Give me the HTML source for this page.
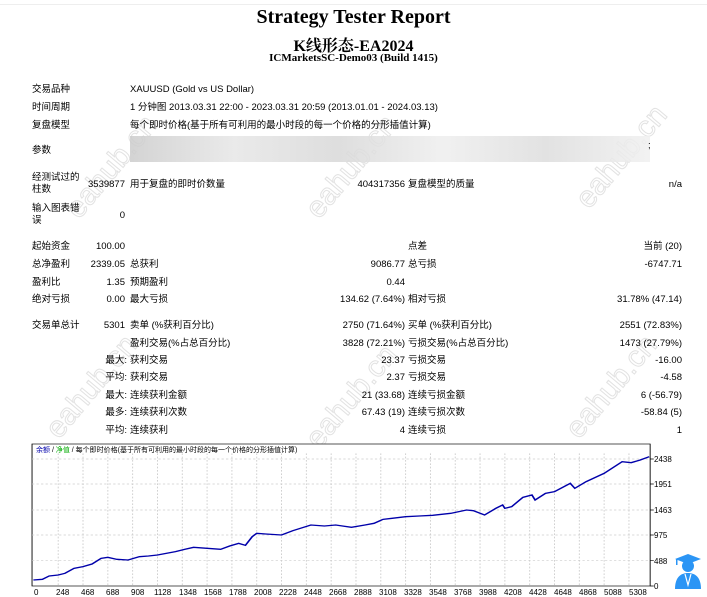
<!DOCTYPE html>
<html><head><meta charset="utf-8"><style>
*{margin:0;padding:0}
body{width:707px;height:597px;background:#fff;position:relative;overflow:hidden;font-family:"Liberation Sans","Noto Sans CJK SC",sans-serif;font-size:9.5px;color:#000}
.t{position:absolute;white-space:nowrap;line-height:12px}
.r{text-align:right}
.h{position:absolute;left:0;width:707px;text-align:center;font-family:"Liberation Serif","Noto Serif CJK SC",serif;font-weight:bold;white-space:nowrap}
.wm{position:absolute;color:transparent;-webkit-text-stroke:1px #e2e2e2;font-size:30px;transform:rotate(-50deg);font-family:"Liberation Sans",sans-serif;white-space:nowrap}
.ax{position:absolute;font-size:8px;white-space:nowrap;line-height:9px}
</style></head><body>
<div style="position:absolute;left:0;top:4px;width:707px;height:1px;background:#eee"></div>
<div class="wm" style="left:50px;top:150px">eahub.cn</div>
<div class="wm" style="left:290px;top:150px">eahub.cn</div>
<div class="wm" style="left:560px;top:140px">eahub.cn</div>
<div class="wm" style="left:30px;top:370px">eahub.cn</div>
<div class="wm" style="left:290px;top:380px">eahub.cn</div>
<div class="wm" style="left:550px;top:370px">eahub.cn</div>

<div class="h" style="top:6px;font-size:20px">Strategy Tester Report</div>
<div class="h" style="top:33px;font-size:16px">K线形态-EA2024</div>
<div class="h" style="top:52px;font-size:11px">ICMarketsSC-Demo03 (Build 1415)</div>

<div class="t" style="left:32px;top:84px">交易品种</div><div class="t" style="left:130px;top:84px">XAUUSD (Gold vs US Dollar)</div>
<div class="t" style="left:32px;top:102px">时间周期</div><div class="t" style="left:130px;top:102px">1 分钟图 2013.03.31 22:00 - 2023.03.31 20:59 (2013.01.01 - 2024.03.13)</div>
<div class="t" style="left:32px;top:120px">复盘模型</div><div class="t" style="left:130px;top:120px">每个即时价格(基于所有可利用的最小时段的每一个价格的分形插值计算)</div>
<div class="t" style="left:32px;top:145px">参数</div>
<div style="position:absolute;left:130px;top:136px;width:520px;height:26px;background:linear-gradient(90deg,#ccc,#e6e6e6 20%,#d8d8d8 40%,#eee 60%,#ddd 80%,#f0f0f0);opacity:.85"></div>
<div class="t" style="left:648px;top:140px">;</div>
<div class="t" style="left:32px;top:172px">经测试过的<br>柱数</div><div class="t r" style="left:60px;width:65px;top:179px">3539877</div>
<div class="t" style="left:130px;top:179px">用于复盘的即时价数量</div><div class="t r" style="left:300px;width:105px;top:179px">404317356</div>
<div class="t" style="left:408px;top:179px">复盘模型的质量</div><div class="t r" style="left:600px;width:82px;top:179px">n/a</div>
<div class="t" style="left:32px;top:203px">输入图表错<br>误</div><div class="t r" style="left:60px;width:65px;top:210px">0</div>

<div class="t" style="left:32px;top:241px">起始资金</div><div class="t r" style="left:60px;width:65px;top:241px">100.00</div>
<div class="t" style="left:408px;top:241px">点差</div><div class="t r" style="left:560px;width:122px;top:241px">当前 (20)</div>
<div class="t" style="left:32px;top:259px">总净盈利</div><div class="t r" style="left:60px;width:65px;top:259px">2339.05</div>
<div class="t" style="left:130px;top:259px">总获利</div><div class="t r" style="left:300px;width:105px;top:259px">9086.77</div>
<div class="t" style="left:408px;top:259px">总亏损</div><div class="t r" style="left:560px;width:122px;top:259px">-6747.71</div>
<div class="t" style="left:32px;top:277px">盈利比</div><div class="t r" style="left:60px;width:65px;top:277px">1.35</div>
<div class="t" style="left:130px;top:277px">预期盈利</div><div class="t r" style="left:300px;width:105px;top:277px">0.44</div>
<div class="t" style="left:32px;top:294px">绝对亏损</div><div class="t r" style="left:60px;width:65px;top:294px">0.00</div>
<div class="t" style="left:130px;top:294px">最大亏损</div><div class="t r" style="left:250px;width:155px;top:294px">134.62 (7.64%)</div>
<div class="t" style="left:408px;top:294px">相对亏损</div><div class="t r" style="left:560px;width:122px;top:294px">31.78% (47.14)</div>

<div class="t" style="left:32px;top:320px">交易单总计</div><div class="t r" style="left:60px;width:65px;top:320px">5301</div>
<div class="t" style="left:130px;top:320px">卖单 (%获利百分比)</div><div class="t r" style="left:250px;width:155px;top:320px">2750 (71.64%)</div>
<div class="t" style="left:408px;top:320px">买单 (%获利百分比)</div><div class="t r" style="left:560px;width:122px;top:320px">2551 (72.83%)</div>
<div class="t" style="left:130px;top:338px">盈利交易(%占总百分比)</div><div class="t r" style="left:250px;width:155px;top:338px">3828 (72.21%)</div>
<div class="t" style="left:408px;top:338px">亏损交易(%占总百分比)</div><div class="t r" style="left:560px;width:122px;top:338px">1473 (27.79%)</div>
<div class="t r" style="left:60px;width:67px;top:355px">最大:</div><div class="t" style="left:130px;top:355px">获利交易</div><div class="t r" style="left:250px;width:155px;top:355px">23.37</div>
<div class="t" style="left:408px;top:355px">亏损交易</div><div class="t r" style="left:560px;width:122px;top:355px">-16.00</div>
<div class="t r" style="left:60px;width:67px;top:372px">平均:</div><div class="t" style="left:130px;top:372px">获利交易</div><div class="t r" style="left:250px;width:155px;top:372px">2.37</div>
<div class="t" style="left:408px;top:372px">亏损交易</div><div class="t r" style="left:560px;width:122px;top:372px">-4.58</div>
<div class="t r" style="left:60px;width:67px;top:390px">最大:</div><div class="t" style="left:130px;top:390px">连续获利金额</div><div class="t r" style="left:250px;width:155px;top:390px">21 (33.68)</div>
<div class="t" style="left:408px;top:390px">连续亏损金额</div><div class="t r" style="left:560px;width:122px;top:390px">6 (-56.79)</div>
<div class="t r" style="left:60px;width:67px;top:407px">最多:</div><div class="t" style="left:130px;top:407px">连续获利次数</div><div class="t r" style="left:250px;width:155px;top:407px">67.43 (19)</div>
<div class="t" style="left:408px;top:407px">连续亏损次数</div><div class="t r" style="left:560px;width:122px;top:407px">-58.84 (5)</div>
<div class="t r" style="left:60px;width:67px;top:425px">平均:</div><div class="t" style="left:130px;top:425px">连续获利</div><div class="t r" style="left:250px;width:155px;top:425px">4</div>
<div class="t" style="left:408px;top:425px">连续亏损</div><div class="t r" style="left:560px;width:122px;top:425px">1</div>

<svg style="position:absolute;left:0;top:440px" width="707" height="157" viewBox="1 0 1567 471" preserveAspectRatio="none">
<rect x="72" y="12" width="1370" height="426" fill="#fff" stroke="#000" stroke-width="2"/>
<g stroke="#ccc" stroke-width="2" stroke-dasharray="5,5">
<line x1="72" y1="57" x2="1442" y2="57"/><line x1="72" y1="132" x2="1442" y2="132"/><line x1="72" y1="210" x2="1442" y2="210"/><line x1="72" y1="285" x2="1442" y2="285"/><line x1="72" y1="362" x2="1442" y2="362"/>
<path d="M130 40V438M185 40V438M240 40V438M295 40V438M350 40V438M405 40V438M460 40V438M515 40V438M570 40V438M625 40V438M680 40V438M735 40V438M790 40V438M845 40V438M900 40V438M955 40V438M1010 40V438M1065 40V438M1120 40V438M1175 40V438M1230 40V438M1285 40V438M1340 40V438M1395 40V438"/>
</g>
<g stroke="#000" stroke-width="2"><path d="M1442 57h8M1442 132h8M1442 210h8M1442 285h8M1442 362h8M1442 438h8"/></g>
<polyline fill="none" stroke="#0000aa" stroke-width="4" points="75,420 95,418 110,408 130,405 145,400 165,385 185,380 205,372 225,355 240,352 260,358 285,360 310,350 330,348 350,345 390,335 410,328 430,322 460,325 490,328 510,318 530,310 545,316 560,290 570,280 590,282 625,285 650,272 690,255 720,258 745,255 760,258 780,262 810,255 830,250 850,238 870,235 900,230 930,228 960,226 1000,220 1035,210 1050,212 1075,225 1100,205 1115,195 1120,205 1135,200 1160,172 1180,165 1187,180 1210,160 1230,155 1265,130 1275,145 1300,125 1340,100 1380,65 1400,68 1420,60 1440,50"/>
</svg>
<svg style="position:absolute;left:673px;top:553px" width="30" height="36" viewBox="0 0 30 36">
<g fill="#2b95f5"><path d="M2 6 L15 1 L28 6 L15 11Z"/><rect x="3" y="6" width="1.5" height="6"/><circle cx="15" cy="13" r="6"/><path d="M2 36 C2 24 8 20 15 20 C22 20 28 24 28 36Z"/></g>
<path d="M12 21 L15 32 L18 21" fill="none" stroke="#fff" stroke-width="1.2"/>
</svg>
<div class="ax" style="left:36px;top:446px;font-size:7px"><span style="color:#00a">余额</span> / <span style="color:#0a0">净值</span> / 每个即时价格(基于所有可利用的最小时段的每一个价格的分形插值计算)</div>
<div class="ax" style="left:654px;top:455px">2438</div>
<div class="ax" style="left:654px;top:480px">1951</div>
<div class="ax" style="left:654px;top:506px">1463</div>
<div class="ax" style="left:654px;top:531px">975</div>
<div class="ax" style="left:654px;top:557px">488</div>
<div class="ax" style="left:654px;top:582px">0</div>
<div class="ax" style="left:34px;top:588px">0</div>
<div class="ax" style="left:56px;top:588px">248</div><div class="ax" style="left:81px;top:588px">468</div><div class="ax" style="left:106px;top:588px">688</div><div class="ax" style="left:131px;top:588px">908</div><div class="ax" style="left:154px;top:588px">1128</div><div class="ax" style="left:179px;top:588px">1348</div><div class="ax" style="left:204px;top:588px">1568</div><div class="ax" style="left:229px;top:588px">1788</div><div class="ax" style="left:254px;top:588px">2008</div><div class="ax" style="left:279px;top:588px">2228</div><div class="ax" style="left:304px;top:588px">2448</div><div class="ax" style="left:329px;top:588px">2668</div><div class="ax" style="left:354px;top:588px">2888</div><div class="ax" style="left:379px;top:588px">3108</div><div class="ax" style="left:404px;top:588px">3328</div><div class="ax" style="left:429px;top:588px">3548</div><div class="ax" style="left:454px;top:588px">3768</div><div class="ax" style="left:479px;top:588px">3988</div><div class="ax" style="left:504px;top:588px">4208</div><div class="ax" style="left:529px;top:588px">4428</div><div class="ax" style="left:554px;top:588px">4648</div><div class="ax" style="left:579px;top:588px">4868</div><div class="ax" style="left:604px;top:588px">5088</div><div class="ax" style="left:629px;top:588px">5308</div>
</body></html>
